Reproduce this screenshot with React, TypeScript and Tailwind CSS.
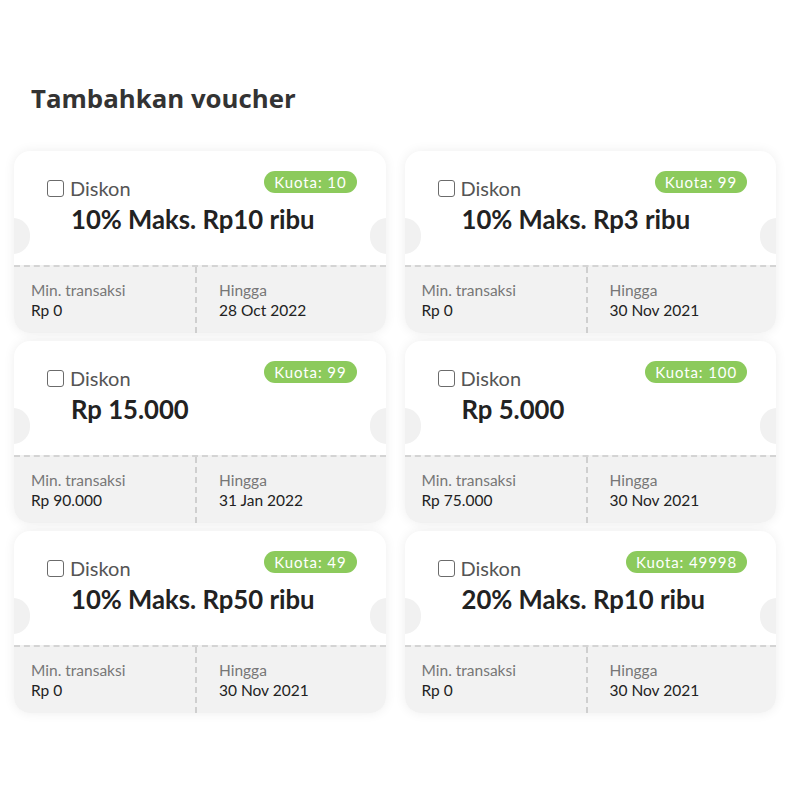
const vouchers = [
  { title: "10% Maks. Rp10 ribu", kuota: "10", min: "Rp 0", until: "28 Oct 2022" },
  { title: "10% Maks. Rp3 ribu", kuota: "99", min: "Rp 0", until: "30 Nov 2021" },
  { title: "Rp 15.000", kuota: "99", min: "Rp 90.000", until: "31 Jan 2022" },
  { title: "Rp 5.000", kuota: "100", min: "Rp 75.000", until: "30 Nov 2021" },
  { title: "10% Maks. Rp50 ribu", kuota: "49", min: "Rp 0", until: "30 Nov 2021" },
  { title: "20% Maks. Rp10 ribu", kuota: "49998", min: "Rp 0", until: "30 Nov 2021" },
];

const VoucherCard = ({ v }: { v: (typeof vouchers)[number] }) => (
  <div className="relative h-[182px] rounded-2xl overflow-hidden bg-white shadow-[0_0_12px_rgba(0,0,0,0.07)] flex flex-col">
    <div className="absolute left-[-18px] top-[67px] w-[34px] h-[36px] rounded-full bg-[#f1f1f1]" />
    <div className="absolute right-[-18px] top-[67px] w-[34px] h-[36px] rounded-full bg-[#f1f1f1]" />
    <div className="h-[114px] pl-[33px] pr-[29px] pt-[20px]">
      <div className="flex items-start justify-between">
        <label className="flex items-center gap-[6px] mt-[7px]">
          <span className="w-[17px] h-[17px] rounded-[3px] border border-[#6b6b6b] bg-white" />
          <span className="text-[20px] leading-[20px] text-[#555]">Diskon</span>
        </label>
        <span className="rounded-full bg-[#8cca5c] text-white text-[15px] leading-[22px] tracking-[0.9px] px-[10px]">
          Kuota: {v.kuota}
        </span>
      </div>
      <div className="pl-[24px] mt-[6px] text-[25.7px] leading-[30px] font-bold text-[#222]">{v.title}</div>
    </div>
    <div className="flex-1 bg-[#f2f2f2] border-t-2 border-dashed border-[#d4d4d4] grid grid-cols-[183px_1fr]">
      <div className="pl-[17px] pt-[13px] border-r-2 border-dashed border-[#cfcfcf]">
        <div className="text-[15.5px] leading-[20px] text-[#777]">Min. transaksi</div>
        <div className="text-[15.5px] leading-[20px] text-[#222]">{v.min}</div>
      </div>
      <div className="pl-[22px] pt-[13px]">
        <div className="text-[15.5px] leading-[20px] text-[#777]">Hingga</div>
        <div className="text-[15.5px] leading-[20px] text-[#222]">{v.until}</div>
      </div>
    </div>
  </div>
);

export default function App() {
  return (
    <div className="w-[800px] h-[800px] bg-white pt-[80px] pl-[14px] font-['Lato','Noto_Sans',sans-serif]">
      <h1 className="pl-[17px] text-[25.8px] leading-[36px] font-bold text-[#333] font-['Open_Sans',sans-serif]">
        Tambahkan voucher
      </h1>
      <div className="mt-[35px] w-[762px] grid grid-cols-2 gap-x-[19px] gap-y-[8px]">
        {vouchers.map((v, i) => (
          <VoucherCard key={i} v={v} />
        ))}
      </div>
    </div>
  );
}
